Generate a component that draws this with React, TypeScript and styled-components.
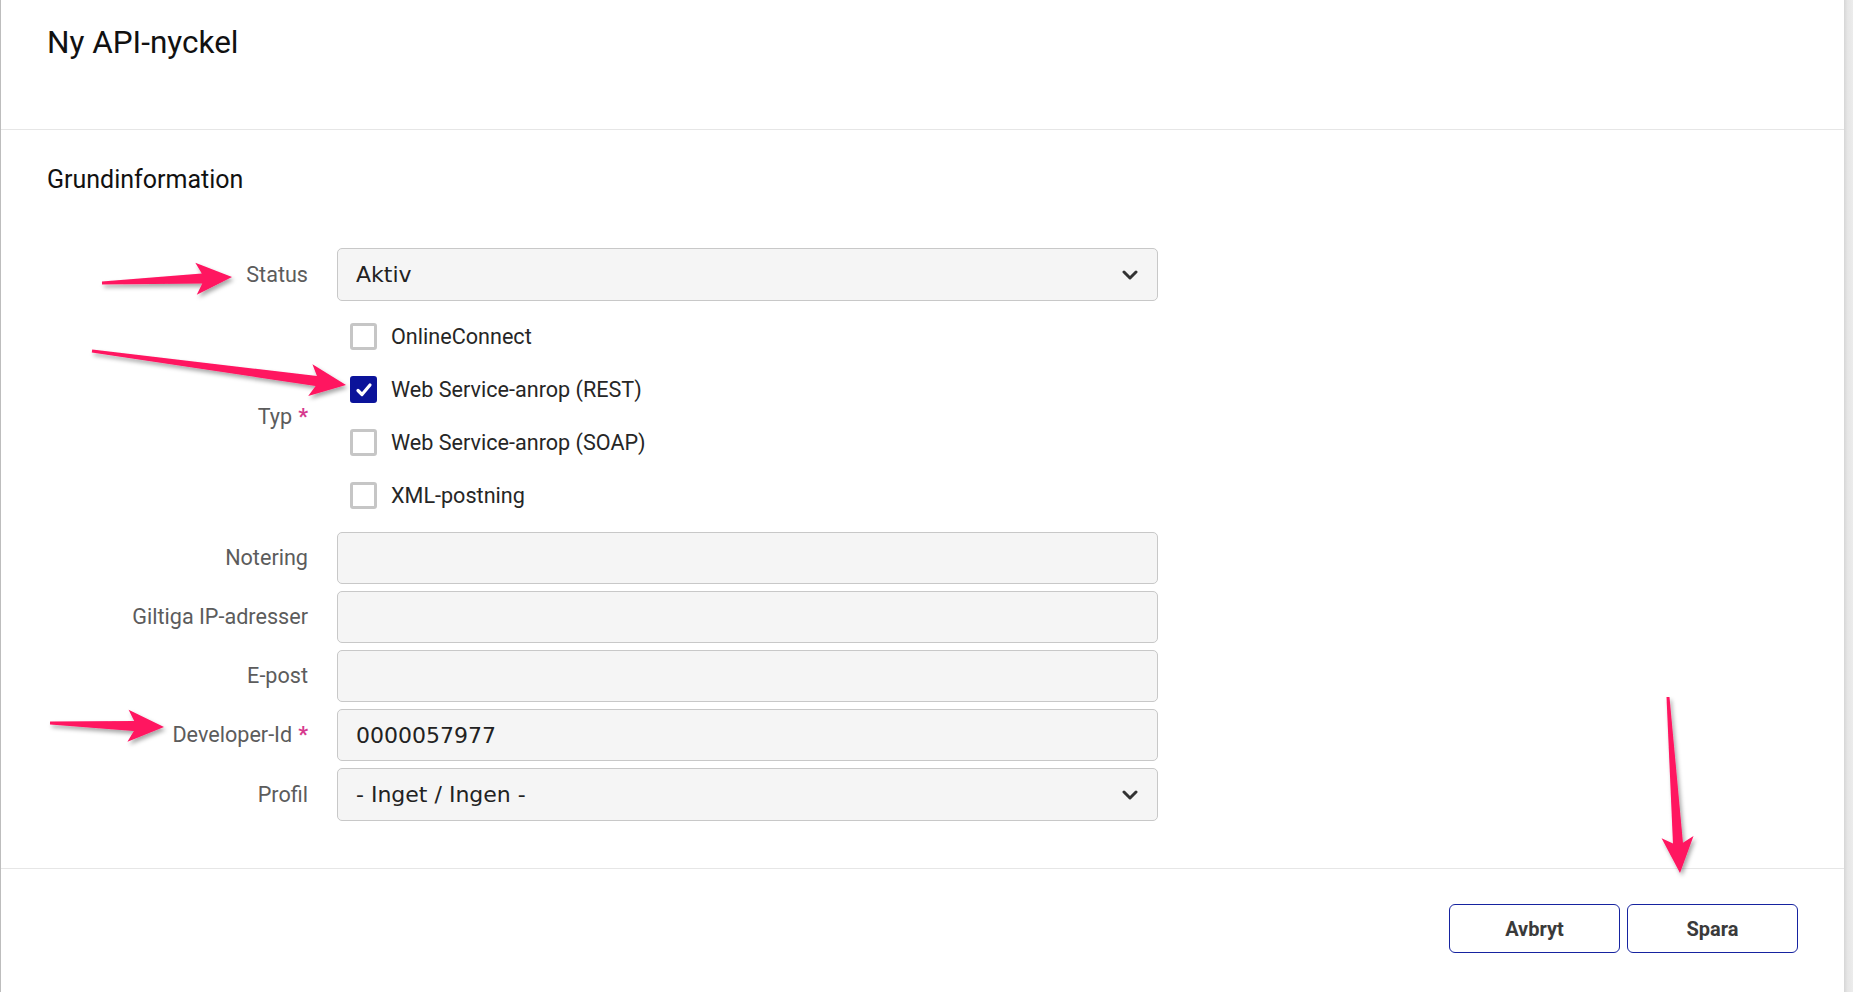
import React from "react";
import styled, { createGlobalStyle } from "styled-components";

const GlobalStyle = createGlobalStyle`
  html, body {
    margin: 0;
    padding: 0;
    background: #ffffff;
  }
  body {
    font-family: Roboto, "Liberation Sans", Arial, sans-serif;
  }
  * {
    box-sizing: border-box;
  }
`;

const Page = styled.div`
  position: relative;
  display: flex;
  width: 100%;
  height: 100vh;
  min-height: 992px;
  overflow: hidden;
`;

const Panel = styled.div`
  flex: 1;
  display: flex;
  flex-direction: column;
  border-left: 1px solid #bdbdbd;
  background: #ffffff;
`;

const ScrollStrip = styled.div`
  width: 9px;
  background: linear-gradient(to right, #d6d6d6, #e6e6e6 40%, #ececec);
`;

const Header = styled.header`
  height: 130px;
  padding: 24px 0 0 46px;
  border-bottom: 1px solid #e6e6e6;
`;

const Title = styled.h1`
  margin: 0;
  font-size: 31.5px;
  line-height: 37px;
  font-weight: 400;
  color: #111111;
`;

const Body = styled.section`
  padding: 35px 0 47px 46px;
`;

const SectionTitle = styled.h2`
  margin: 0 0 54px;
  font-size: 25px;
  line-height: 29px;
  font-weight: 400;
  color: #111111;
`;

const FormGrid = styled.div`
  display: grid;
  grid-template-columns: 261px 821px;
  column-gap: 29px;
  row-gap: 7px;
  align-items: center;
`;

const Label = styled.label`
  justify-self: end;
  font-size: 21.6px;
  line-height: 26px;
  color: #5c5c5c;
  white-space: nowrap;
`;

const Required = styled.span`
  margin-left: 6px;
  color: #d63a8e;
  font-weight: 700;
`;

const fieldBase = `
  width: 100%;
  height: 52px;
  border: 1px solid #c8c8c8;
  border-radius: 5px;
  background: #f5f5f5;
  font-family: "DejaVu Sans", Verdana, sans-serif;
  font-size: 22px;
  color: #222222;
`;

const SelectBox = styled.div`
  ${fieldBase}
  height: 53px;
  display: flex;
  align-items: center;
  justify-content: space-between;
  padding: 0 19px 0 18px;
`;

const TextInput = styled.input`
  ${fieldBase}
  padding: 0 18px;
  outline: none;
`;

const CheckList = styled.div`
  display: flex;
  flex-direction: column;
  padding: 2px 0 3px 13px;
`;

const CheckRow = styled.div`
  display: flex;
  align-items: center;
  gap: 14px;
  height: 53px;
  font-size: 21.6px;
  color: #262626;
`;

const Box = styled.span<{ $checked?: boolean }>`
  display: flex;
  align-items: center;
  justify-content: center;
  width: 27px;
  height: 27px;
  border-radius: 3px;
  border: 3px solid ${(p) => (p.$checked ? "#0b139a" : "#c6c6c6")};
  background: ${(p) => (p.$checked ? "#0b139a" : "#ffffff")};
`;

const Footer = styled.footer`
  display: flex;
  justify-content: flex-end;
  gap: 7px;
  padding: 35px 46px 0 0;
  border-top: 1px solid #e6e6e6;
`;

const Button = styled.button`
  width: 171px;
  height: 49px;
  border: 1.5px solid #1623a0;
  border-radius: 6px;
  background: #ffffff;
  font-family: Roboto, "Liberation Sans", Arial, sans-serif;
  font-size: 20px;
  font-weight: 700;
  color: #3a3a3a;
  cursor: pointer;
`;

const Overlay = styled.svg`
  position: absolute;
  top: 0;
  left: 0;
  width: 100%;
  height: 100%;
  pointer-events: none;
`;

const Chevron = () => (
  <svg width="16" height="10" viewBox="0 0 16 10">
    <path d="M2 2 L8 8 L14 2" fill="none" stroke="#333" strokeWidth="3" strokeLinecap="round" strokeLinejoin="round" />
  </svg>
);

const Check = () => (
  <svg width="18" height="16" viewBox="0 0 18 16">
    <path d="M3 8.5 L7 12.5 L15 3" fill="none" stroke="#fff" strokeWidth="3.2" strokeLinecap="round" strokeLinejoin="round" />
  </svg>
);

type Pt = [number, number];

// tapered annotation arrow from tail to tip
const arrowPoints = (tail: Pt, tip: Pt, headLen = 30, headW = 32, w0 = 3, w1 = 10) => {
  const dx = tip[0] - tail[0];
  const dy = tip[1] - tail[1];
  const len = Math.hypot(dx, dy);
  const ux = dx / len;
  const uy = dy / len;
  const nx = -uy;
  const ny = ux;
  const bx = tip[0] - ux * headLen;
  const by = tip[1] - uy * headLen;
  const back = 6;
  const pts: Pt[] = [
    [tail[0] + (nx * w0) / 2, tail[1] + (ny * w0) / 2],
    [bx + (nx * w1) / 2, by + (ny * w1) / 2],
    [bx - ux * back + (nx * headW) / 2, by - uy * back + (ny * headW) / 2],
    tip,
    [bx - ux * back - (nx * headW) / 2, by - uy * back - (ny * headW) / 2],
    [bx - (nx * w1) / 2, by - (ny * w1) / 2],
    [tail[0] - (nx * w0) / 2, tail[1] - (ny * w0) / 2],
  ];
  return pts.map((p) => p.join(",")).join(" ");
};

const arrows: [Pt, Pt][] = [
  [[102, 283], [232, 277]],
  [[92, 351], [346, 385]],
  [[50, 723], [164, 727]],
  [[1668, 697], [1680, 873]],
];

const typer = ["OnlineConnect", "Web Service-anrop (REST)", "Web Service-anrop (SOAP)", "XML-postning"];

export default function App() {
  return (
    <>
      <GlobalStyle />
      <Page>
        <Panel>
          <Header>
            <Title>Ny API-nyckel</Title>
          </Header>
          <Body>
            <SectionTitle>Grundinformation</SectionTitle>
            <FormGrid>
              <Label>Status</Label>
              <SelectBox>
                <span>Aktiv</span>
                <Chevron />
              </SelectBox>

              <Label>
                Typ<Required>*</Required>
              </Label>
              <CheckList>
                {typer.map((t) => (
                  <CheckRow key={t}>
                    <Box $checked={t === "Web Service-anrop (REST)"}>
                      {t === "Web Service-anrop (REST)" && <Check />}
                    </Box>
                    {t}
                  </CheckRow>
                ))}
              </CheckList>

              <Label>Notering</Label>
              <TextInput />

              <Label>Giltiga IP-adresser</Label>
              <TextInput />

              <Label>E-post</Label>
              <TextInput />

              <Label>
                Developer-Id<Required>*</Required>
              </Label>
              <TextInput defaultValue="0000057977" />

              <Label>Profil</Label>
              <SelectBox>
                <span>- Inget / Ingen -</span>
                <Chevron />
              </SelectBox>
            </FormGrid>
          </Body>
          <Footer>
            <Button>Avbryt</Button>
            <Button>Spara</Button>
          </Footer>
        </Panel>
        <ScrollStrip />
        <Overlay>
          <defs>
            <filter id="arrowShadow" x="-20%" y="-20%" width="140%" height="140%">
              <feDropShadow dx="2" dy="3" stdDeviation="2" floodColor="#000" floodOpacity="0.35" />
            </filter>
          </defs>
          {arrows.map(([a, b], i) => (
            <polygon key={i} points={arrowPoints(a, b)} fill="#ff1461" filter="url(#arrowShadow)" />
          ))}
        </Overlay>
      </Page>
    </>
  );
}
